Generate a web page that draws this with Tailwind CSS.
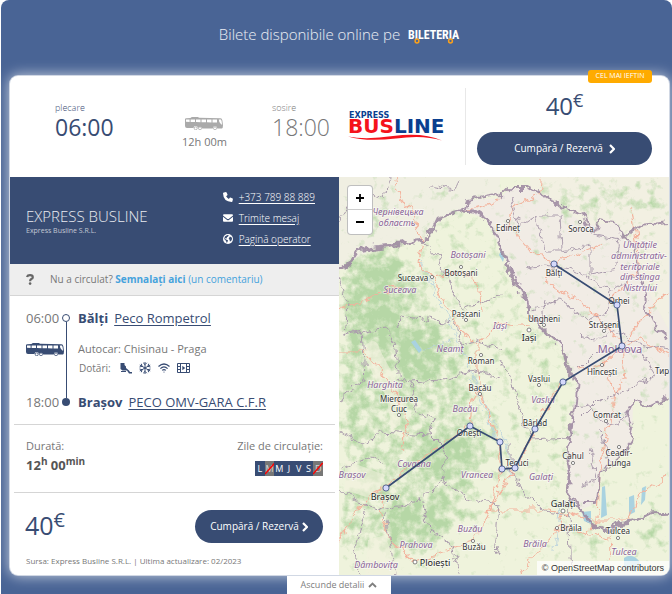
<!DOCTYPE html>
<html lang="ro">
<head>
<meta charset="utf-8">
<meta name="viewport" content="width=device-width, initial-scale=1">
<title>Bilete disponibile online</title>
<script src="https://cdn.jsdelivr.net/npm/@tailwindcss/browser@4"></script>
</head>
<body class="bg-white pl-px font-['Open_Sans','Noto_Sans',sans-serif] text-[#777]">
<svg class="hidden" aria-hidden="true">
  <symbol id="bus" viewBox="0 0 38 13">
    <path fill="currentColor" fill-rule="evenodd" d="M0 2.2Q0 1.2 1.2 1.2L5.500 1Q6 0 7.500 0H12.500Q13.600 0 14 .8L35.500 1.200Q37 1.300 37.400 3.500L38 8.500Q38 11.200 36.800 11.500H32.200A2.200 2.200 0 0 0 27.800 11.500H17.200A2.200 2.200 0 0 0 12.900 11.300A2.200 2.200 0 0 0 8.500 11H2Q0 10.800 0 9ZM1 2.600V4.800L4.600 5V2.600ZM5.600 2.500V5L10 5.100V2.500ZM11 2.500V5.100L15.500 5.200V2.500ZM16.500 2.500V5.200L21 5.300V2.500ZM22 2.500V5.300L26.500 5.400V2.500ZM27.500 2.500V5.500L32 5.600V2.500ZM33.800 2.600Q33.800 6 36.300 7.500H37Q36.800 3.500 36 2.600Z"/>
    <circle cx="10.700" cy="11.300" r="1.500" fill="none" stroke="currentColor" stroke-width=".8"/>
    <circle cx="15" cy="11.300" r="1.500" fill="none" stroke="currentColor" stroke-width=".8"/>
    <circle cx="30" cy="11.300" r="1.500" fill="none" stroke="currentColor" stroke-width=".8"/>
  </symbol>
  <symbol id="chev" viewBox="0 0 6 10"><path d="M1 1L5 5L1 9" fill="none" stroke="currentColor" stroke-width="2.200"/></symbol>
</svg>
<main class="flex min-h-screen flex-col rounded-t-lg bg-[#496495] pr-[3px] pl-[9px]">
  <h1 class="flex h-19 items-center justify-center pb-2 text-[15px] font-light text-white/90">
    <span>Bilete disponibile online pe</span>
    <svg class="ml-2 h-5 w-13" viewBox="0 0 52 20" role="img" aria-label="Bileteria">
      <text x="0" y="15" font-family="'Liberation Sans Narrow','Roboto Condensed','Liberation Sans',sans-serif" font-weight="700" font-size="12" fill="#fff">BILETERIA</text>
      <circle cx="9" cy="17" r="1.900" fill="none" stroke="#f9a01b" stroke-width="1.500"/>
      <circle cx="42.500" cy="17" r="1.900" fill="none" stroke="#f9a01b" stroke-width="1.500"/>
    </svg>
  </h1>

  <article class="relative rounded-lg bg-white shadow-[0_0_14px_1px_rgba(255,255,255,0.7),0_0_0_1px_rgba(255,255,255,0.6)]">
    <span class="absolute -top-[6px] right-[17px] z-10 flex h-[13px] w-16 items-center justify-center rounded-[3px] bg-[#ffab00] text-[7px] text-white">CEL MAI IEFTIN</span>

    <header class="flex h-[101px]">
      <div class="grid min-w-0 flex-1 grid-cols-[127fr_90fr_76fr_117fr] items-start justify-items-start pl-[45px]">
        <div class="pt-[26px] text-[#384c73]">
          <p class="text-[9px] leading-3 font-light">plecare</p>
          <p class="text-[23px] leading-[26px]">06:00</p>
        </div>
        <div class="flex flex-col items-center pt-[41px]">
          <svg class="h-[13px] w-[38px] text-[#aaa]"><use href="#bus"/></svg>
          <p class="pt-1 text-[11px] leading-4">12h 00m</p>
        </div>
        <div class="pt-[26px]">
          <p class="text-[9px] leading-3 font-light">sosire</p>
          <p class="text-[23px] leading-[26px] font-light">18:00</p>
        </div>
        <svg class="mt-8 h-10 w-[98px]" viewBox="0 0 98 40" role="img" aria-label="Express Busline">
          <g font-family="'DejaVu Sans',sans-serif" font-weight="700">
            <text x="1" y="10" font-size="8" fill="#0b3f8f">EXPRESS</text>
            <text x="0" y="25" font-size="20"><tspan fill="#f5131c">BUS</tspan><tspan fill="#0b3f8f">LINE</tspan></text>
          </g>
          <path d="M0 28.500Q18 32 45 28Q75 24 94 32.500Q75 26.500 48 30.500Q18 34 0 28.500Z" fill="#f5131c"/>
        </svg>
      </div>
      <div class="my-3 w-[204px] border-l border-[#e8e8e8] pr-[17px] pl-[11px] text-center">
        <p class="pb-2 text-2xl leading-9 text-[#384c73]">40<sup class="-top-2 text-[18px]">€</sup></p>
        <button class="flex h-[33px] w-full items-center justify-center gap-[6px] rounded-full bg-[#384c73] text-[10px] text-white">Cumpără / Rezervă <svg class="h-[10px] w-[6px]"><use href="#chev"/></svg></button>
      </div>
    </header>

    <div class="grid grid-cols-[329fr_330fr]">
      <section>
        <div class="flex h-[87px] items-center justify-between bg-[#384c73] pr-6 pl-4 text-white">
          <div>
            <h2 class="text-[15px] leading-5 font-light text-white/90">EXPRESS BUSLINE</h2>
            <p class="text-[7px] leading-[10px] text-white/70">Express Busline S.R.L.</p>
          </div>
          <ul class="flex flex-col gap-[5px] pb-[6px] text-[10px] leading-4 font-light">
            <li class="flex items-center gap-[6px]"><svg class="size-[10px]" viewBox="0 0 16 16" fill="currentColor"><path d="M1.500 0.800L4.800 0Q5.400 0 5.700.6L7.200 4.100Q7.300 4.700 6.900 5.100L5 6.700Q6.500 9.600 9.300 11L10.900 9.100Q11.400 8.700 11.900 8.900L15.400 10.400Q16 10.700 15.900 11.300L15.200 14.500Q15 15.900 14 16Q0.500 15.500 0 2Q.2.900 1.500.8Z"/></svg><a href="#" class="underline underline-offset-2">+373 789 88 889</a></li>
            <li class="flex items-center gap-[6px]"><svg class="size-[10px]" viewBox="0 0 16 16" fill="currentColor"><path d="M1.500 2H14.500Q16 2 16 4L9 9.500Q8 10 7 9.500L0 4Q0 2 1.500 2ZM0 6L6.500 11Q8 12 9.500 11L16 6V12.500Q16 14 14.500 14H1.500Q0 14 0 12.500Z"/></svg><a href="#" class="underline underline-offset-2">Trimite mesaj</a></li>
            <li class="flex items-center gap-[6px]"><svg class="size-[10px]" viewBox="0 0 16 16"><circle cx="8" cy="8" r="8" fill="#fff"/><path fill="#384c73" d="M7 1.600L9.500 2.500L7.500 4.500L6 5L6.500 7L4 6.500L3.500 8L6 9L8 10L7 13L5.500 14L5 11L2 8L3 4ZM11 4L14 5.500L14.500 8L13 11L11 12L10.500 9L9 7.500Z"/></svg><a href="#" class="underline underline-offset-2">Pagină operator</a></li>
          </ul>
        </div>

        <p class="flex h-8 items-center border-b border-[#d5d5d5] bg-[#eee] pl-4 text-[10px]">
          <svg class="mr-4 h-[11px] w-2" viewBox="0 0 8 11" aria-hidden="true"><path d="M1 3Q1.500 1.100 4 1.100Q6.800 1.100 6.800 3.200Q6.800 4.400 5.300 5.100Q4.100 5.700 4.100 7.200" fill="none" stroke="#666" stroke-width="2.200"/><circle cx="4.100" cy="9.600" r="1.300" fill="#666"/></svg>
          <span>Nu a circulat? <a href="#" class="text-[#45a2dc]"><b class="font-bold">Semnalați aici</b> (un comentariu)</a></span>
        </p>

        <div class="grid grid-cols-[36px_8px_1fr] grid-rows-[16px_1fr_16px] px-4 py-[14px] text-[13px] leading-4 text-[#384c73]">
          <time class="text-[#777]">06:00</time>
          <div class="row-span-3 my-1 flex flex-col items-center">
            <span class="size-2 shrink-0 rounded-full border border-[#384c73]"></span>
            <span class="w-px flex-1 bg-[#384c73]"></span>
            <span class="size-2 shrink-0 rounded-full bg-[#384c73]"></span>
          </div>
          <p class="pl-2"><b>Bălți</b><a href="#" class="ml-[6px] underline underline-offset-2">Peco Rompetrol</a></p>
          <svg class="mt-[17px] h-[13px] w-[38px]"><use href="#bus"/></svg>
          <div class="py-[15px] pl-2 text-[11px] text-[#777]">
            <p class="leading-4">Autocar: Chisinau - Praga</p>
            <div class="flex h-[22px] items-center gap-[7px] pl-px text-[#384c73]">
              <span class="mr-[2px] text-[10px] text-[#777]">Dotări:</span>
              <svg class="size-3" viewBox="0 0 12 12" fill="currentColor"><path d="M.5 1H4.500V3L6 4.500V6L9 8.500L10 10H12V11.500H9L7 8.500H2.500L.5 7ZM1 9H6V10H1Z"/></svg>
              <svg class="size-3" viewBox="0 0 12 12" fill="none" stroke="currentColor"><path d="M6 0V12M.8 3L11.200 9M.8 9L11.200 3M4.200.8L6 2.600L7.800.8M4.200 11.200L6 9.400L7.800 11.200M.5 5L3 4.300L2.400 1.800M11.500 5L9 4.300L9.600 1.800M.5 7L3 7.700L2.400 10.200M11.500 7L9 7.700L9.600 10.200"/></svg>
              <svg class="h-[10px] w-3" viewBox="0 0 12 10" fill="none" stroke="currentColor" stroke-width="1.200"><path d="M.5 3.500Q6-1.500 11.500 3.500M2.400 5.600Q6 2.200 9.600 5.600M4.200 7.400Q6 5.700 7.800 7.400"/><circle cx="6" cy="9" r=".6" fill="currentColor" stroke="none"/></svg>
              <svg class="h-[10px] w-[13px]" viewBox="0 0 13 10" fill="none" stroke="currentColor"><path d="M.5.5H12.500V9.500H.5ZM3.500.5V9.500M9.500.5V9.500M.5 3.500H3.500M.5 6.500H3.500M9.500 3.500H12.500M9.500 6.500H12.500"/><path d="M5.300 2.800L8.300 5L5.300 7.200Z" fill="currentColor" stroke="none"/></svg>
            </div>
          </div>
          <time class="text-[#777]">18:00</time>
          <p class="pl-2"><b>Brașov</b><a href="#" class="ml-[6px] underline underline-offset-2">PECO OMV-GARA C.F.R</a></p>
        </div>

        <div class="mx-1 flex h-[69px] justify-between border-y border-[#d5d5d5] px-3 pt-3 text-[11px]">
          <div>
            <p class="leading-[18px]">Durată:</p>
            <p class="text-[13px] leading-5 font-bold text-[#555]">12<sup class="-top-[5px] text-[10px]">h</sup> 00<sup class="-top-[5px] text-[10px]">min</sup></p>
          </div>
          <div class="flex flex-col items-end">
            <p class="leading-[18px]">Zile de circulație:</p>
            <ul class="mt-[6px] grid h-[15px] w-17 grid-cols-7 bg-[#384c73] text-center text-[9px] leading-[15px] text-white">
              <li>L</li>
              <li class="relative bg-[#777] text-white/70">M<svg class="absolute inset-0 size-full" viewBox="0 0 10 15" preserveAspectRatio="none"><path d="M0 13L10 2" stroke="red" stroke-width="1.500"/></svg></li>
              <li>M</li><li>J</li><li>V</li><li>S</li>
              <li class="relative bg-[#777] text-white/70">D<svg class="absolute inset-0 size-full" viewBox="0 0 10 15" preserveAspectRatio="none"><path d="M0 13L10 2" stroke="red" stroke-width="1.500"/></svg></li>
            </ul>
          </div>
        </div>

        <div class="flex h-[50px] items-end justify-between pr-4 pl-[15px]">
          <p class="pb-px text-[25px] leading-[34px] text-[#384c73]">40<sup class="-top-2 text-[20px]">€</sup></p>
          <button class="flex h-[33px] w-32 items-center justify-center gap-[3px] rounded-full bg-[#384c73] text-[10px] text-white">Cumpără / Rezervă <svg class="h-[10px] w-[6px]"><use href="#chev"/></svg></button>
        </div>
        <p class="pt-[13px] pb-[9px] pl-4 text-[8px] leading-[10px]">Sursa: Express Busline S.R.L. | Ultima actualizare: 02/2023</p>
      </section>

      <section class="relative overflow-hidden rounded-br-lg" aria-label="Hartă">
        <svg class="absolute inset-0 size-full" viewBox="339 177 330 398" preserveAspectRatio="xMidYMid slice">
          <defs>
            <filter id="forest" filterUnits="userSpaceOnUse" x="320" y="160" width="370" height="430" color-interpolation-filters="sRGB">
              <feGaussianBlur in="SourceGraphic" stdDeviation="8" result="d"/>
              <feTurbulence type="fractalNoise" baseFrequency=".1" numOctaves="5" seed="21" result="n"/>
              <feComposite in="d" in2="n" operator="arithmetic" k2=".5" k3=".5" result="s"/>
              <feComponentTransfer in="s" result="t"><feFuncA type="linear" slope="5" intercept="-2.050"/></feComponentTransfer>
              <feFlood flood-color="#b6d7a6"/>
              <feComposite in2="t" operator="in"/>
            </filter>
            <filter id="jag" filterUnits="userSpaceOnUse" x="320" y="160" width="370" height="430" color-interpolation-filters="sRGB">
              <feTurbulence type="fractalNoise" baseFrequency=".11" numOctaves="3" seed="3"/>
              <feDisplacementMap in="SourceGraphic" scale="11" xChannelSelector="R" yChannelSelector="G"/>
            </filter>
          </defs>
          <rect x="300" y="140" width="420" height="480" fill="#eff3dc"/>
          <path fill="#f1ece5" d="M463 211L467 200L500 198L510 188L530 188L563 208L587 225L600 220L618 223L640 275L669 330V397L650 407L633 400L632 443L600 473L597 503L580 510L567 493L568 443L577 382L562 347L530 313L503 253L485 218Z"/>
          <path fill="#f1ece4" d="M339 177H500V195L467 200L463 211L438 218L423 241L375 247L339 270Z" opacity=".7"/>
          <path fill="#f2f0e2" d="M530 177H669V330L640 275L618 223L587 225L530 188Z"/>
          <g filter="url(#forest)" fill="#000">
            <rect x="339" y="177" width="330" height="398" opacity=".18"/>
            <path opacity=".12" d="M423 241L463 211L485 218L530 313L562 347L577 382L568 443L567 493L500 520L460 350Z"/>
            <path opacity=".36" d="M339 260L400 245L425 290L440 320L460 350L472 400L490 440L470 480L480 510L420 560L339 550Z"/>
            <path opacity=".42" d="M345 262L395 250L405 320L395 345L345 350ZM400 325L440 330L455 370L400 385ZM420 440L470 430L480 470L425 480ZM390 500L440 500L450 530L390 540ZM339 370L360 380L350 430L339 430Z"/>
            <path opacity=".25" d="M339 200L370 180L400 210L350 240ZM530 177H669V215H560ZM500 340H530V365H500Z"/>
            <path opacity=".4" d="M575 525L600 530L605 550L580 545ZM640 515H669V545H640ZM425 195L440 190L445 205L428 210Z"/>
          </g>
          <path fill="#f1f1de" opacity=".6" d="M366 345Q376 335 380 350L396 380Q402 400 400 425L392 430L386 395Q366 370 366 345ZM345 460L385 475L375 500L345 490ZM368 540L385 535L400 575H365Z"/>
          <g fill="#a9d2e0">
            <path d="M602 487L605 486L607 515L601 518ZM582 512L591 511L591 524L584 521ZM629 497L634 495L635 512L629 515ZM642 488L646 486L645 500L641 505ZM624 558Q632 552 640 562L636 572L624 568ZM411 342L415 340L422 350L419 353ZM501 250L504 258L503 262L499 255Z"/>
          </g>
          <g filter="url(#jag)" fill="none" stroke-linejoin="round">
            <path stroke="#b5cfdd" stroke-width=".8" d="M420 260Q450 320 470 370T500 430T510 480M422 350L455 340M470 380Q490 420 495 440M555 550Q558 520 560 505"/>
            <g stroke="#f3b29c" stroke-width="1.100">
              <path d="M396 180L400 200L412 208L422 241L418 262L432 277L460 330L478 345L478 370L480 395L498 440L501 470L488 520L473 541L415 562L390 540L380 510L384 488L370 495L350 520L339 545M339 352L365 352L380 370L400 400L408 430L402 450M432 277L465 272L478 285L482 310M339 310L365 300L400 285M386 488L405 470L450 440L470 425L472 400L478 390M478 345L500 322L530 325M463 211L500 200M542 177L538 195L515 205L508 225L530 250L554 264L545 280L560 290L590 310L610 330L622 346L640 340L669 355M554 264L600 245M622 346L602 365L580 370M622 346L625 380L615 395L605 370M615 395L608 430L600 470L598 520L585 535M563 382L545 410L535 430L515 468M535 430L490 510L550 510L562 512L557 528L520 575M562 512L590 520L630 520L640 495L669 475M610 300L640 270L632 210M669 290L640 320L622 346M556 527L610 538L612 560"/>
            </g>
            <path stroke="#ab9cad" stroke-width="1" d="M339 222L360 190L385 198L390 177M430 185L455 190L460 180M422 241L440 258L445 275L462 310L500 295M339 280L348 305L345 335L385 327L395 345L400 380L410 382L440 380L475 370L500 378M345 335L362 330L365 380L342 398L339 400M395 330L402 315L435 320L455 322L462 345L478 340L500 350M410 382L415 410L435 420L430 435L380 432L365 445L339 432M430 435L445 450L442 480L420 500L385 510L355 500L339 492M365 510L355 550L360 575M385 515L390 540L395 575M420 500L430 530L450 545L460 575M442 480L470 500L498 505L495 540L500 555M500 360L512 380L520 410L530 440L568 438M510 440L510 470L525 495L545 512L570 515M568 500L570 530L572 575M510 200L520 225L535 215L545 250L562 250L560 215L540 215M562 250L590 245L590 275L615 270L620 240L595 235M525 270L545 265L575 270L610 290L608 310L590 320L560 300L530 310M545 300L540 330M610 290L640 275M580 335L595 340L615 330L640 345L669 350M580 370L600 350L640 350L655 375L630 390L600 400L580 420M575 407L590 405L600 420L620 425L630 410M590 450L595 480L580 485M600 430L610 460M339 470L370 455L385 465"/>
            <g stroke="#9a859f" stroke-width="2.800" opacity=".85">
              <path d="M339 270L350 262L358 250L375 247L423 241L430 235L438 218L463 211L475 212L485 218L495 233L503 253L507 265L517 285L528 302L530 313L543 330L562 347L567 367L577 382L575 407L572 425L568 443L567 460L570 477L567 493L580 510L588 522L610 532L617 525L633 523L650 513L672 512"/>
              <path stroke-width="2" d="M463 211L467 200L495 195L500 198L510 188L530 188L547 197L563 208L583 215L587 225L597 232L600 220L618 223L623 238L633 243L640 275L647 295L643 308L655 325L669 337M669 397L650 407L633 400L628 410L633 427L630 443L620 457L600 473L597 503L582 503M623 238L640 225L669 222"/>
            </g>
          </g>
          <g fill="#fff" stroke="#666" stroke-width=".8">
            <circle cx="432" cy="277" r="1.600"/><circle cx="461" cy="267" r="1.600"/><circle cx="508" cy="221" r="1.600"/><circle cx="580" cy="222" r="1.600"/><circle cx="466" cy="320" r="1.600"/><circle cx="481" cy="355" r="1.600"/><circle cx="480" cy="394" r="1.600"/><circle cx="399" cy="415" r="1.600"/><circle cx="529" cy="330" r="2"/><circle cx="544" cy="325" r="1.600"/><circle cx="604" cy="331" r="1.600"/><circle cx="602" cy="365" r="1.600"/><circle cx="539" cy="385" r="1.600"/><circle cx="606" cy="421" r="1.600"/><circle cx="573" cy="463" r="1.600"/><circle cx="619" cy="447" r="1.600"/><circle cx="563" cy="511" r="2"/><circle cx="557" cy="528" r="1.600"/><circle cx="618" cy="538" r="1.600"/><circle cx="415" cy="562" r="2"/><circle cx="473" cy="541" r="1.600"/>
          </g>
          <g font-family="'Noto Sans',sans-serif" text-anchor="middle" paint-order="stroke" stroke="#fff" stroke-opacity=".6" stroke-width="1.500">
            <g font-size="9" font-style="italic" fill="#8a6496">
              <text x="398" y="215">Чернівецька</text><text x="397" y="226">область</text>
              <text x="468" y="258">Botoșani</text><text x="400" y="293">Suceava</text><text x="450" y="352">Neamț</text><text x="385" y="388">Harghita</text><text x="465" y="412">Bacău</text><text x="500" y="329">Iași</text><text x="543" y="403">Vaslui</text>
              <text x="414" y="467">Covasna</text><text x="352" y="478">Brașov</text><text x="477" y="478">Vrancea</text><text x="541" y="480">Galați</text><text x="470" y="532">Buzău</text><text x="416" y="548">Prahova</text><text x="376" y="568">Dâmbovița</text><text x="535" y="547">Brăila</text><text x="624" y="555">Tulcea</text>
              <text x="640" y="248">Unitățile</text><text x="639" y="259">administrativ-</text><text x="640" y="270">teritoriale</text><text x="640" y="280">din stînga</text><text x="640" y="291">Nistrului</text>
            </g>
            <g font-size="8" fill="#333">
              <text x="413" y="281">Suceava</text><text x="461" y="276">Botoșani</text><text x="508" y="231">Edineț</text><text x="581" y="232">Soroca</text><text x="554" y="276">Bălți</text><text x="619" y="304">Orhei</text><text x="466" y="317">Pașcani</text><text x="481" y="364">Roman</text><text x="480" y="391">Bacău</text><text x="399" y="402">Miercurea</text><text x="399" y="412">Ciuc</text><text x="469" y="436">Onești</text><text x="544" y="322">Ungheni</text><text x="604" y="328">Strășeni</text><text x="602" y="375">Hîncești</text><text x="539" y="382">Vaslui</text><text x="535" y="426">Bârlad</text><text x="607" y="418">Comrat</text><text x="517" y="466">Tecuci</text><text x="573" y="459">Cahul</text><text x="619" y="456">Ceadîr-</text><text x="619" y="466">Lunga</text><text x="571" y="531">Brăila</text><text x="618" y="534">Tulcea</text><text x="474" y="550">Buzău</text><text x="655" y="374" text-anchor="start">Тир</text>
            </g>
            <g font-size="9" fill="#222"><text x="529" y="341">Iași</text><text x="385" y="500">Brașov</text><text x="563" y="507">Galați</text><text x="435" y="566">Ploiești</text></g>
            <text x="620" y="353" font-size="11" fill="#8a6496">Moldova</text>
          </g>
          <path d="M554 264L617 305L622 346L563 382L535 429L515 468L502 469L500 442L470 426L386 488" fill="none" stroke="#384c73" stroke-width="1.700"/>
          <g fill="#d5d9fb" stroke="#4a5c8c" stroke-width=".9">
            <circle cx="554" cy="264" r="3.100"/><circle cx="617" cy="305" r="3.100"/><circle cx="622" cy="346" r="3.100"/><circle cx="563" cy="382" r="3.100"/><circle cx="535" cy="429" r="3.100"/><circle cx="515" cy="468" r="3.100"/><circle cx="502" cy="469" r="3.100"/><circle cx="500" cy="442" r="3.100"/><circle cx="470" cy="426" r="3.100"/><circle cx="386" cy="488" r="3.100"/>
          </g>
        </svg>
        <div class="absolute top-2 left-2 flex w-[26px] flex-col rounded-sm border border-black/25 bg-white text-black">
          <button class="flex h-6 items-center justify-center border-b border-[#ccc]" aria-label="Mărește"><svg class="size-2" viewBox="0 0 8 8"><path d="M4 0V8M0 4H8" stroke="#000" stroke-width="1.800"/></svg></button>
          <button class="flex h-6 items-center justify-center" aria-label="Micșorează"><svg class="size-2" viewBox="0 0 8 8"><path d="M0 4H8" stroke="#000" stroke-width="1.800"/></svg></button>
        </div>
        <p class="absolute right-0 bottom-0 bg-white/75 px-[5px] font-['Liberation_Sans',sans-serif] text-[9px] leading-[14px] text-[#333]">© OpenStreetMap contributors</p>
      </section>
    </div>
  </article>

  <button class="mt-px ml-[-1px] flex w-[104px] flex-1 items-center justify-center gap-1 self-center bg-white text-[9px]">Ascunde detalii <svg class="h-[6px] w-[9px]" viewBox="0 0 9 6"><path d="M1 5L4.500 1.500L8 5" fill="none" stroke="#777" stroke-width="1.800"/></svg></button>
</main>
</body>
</html>
